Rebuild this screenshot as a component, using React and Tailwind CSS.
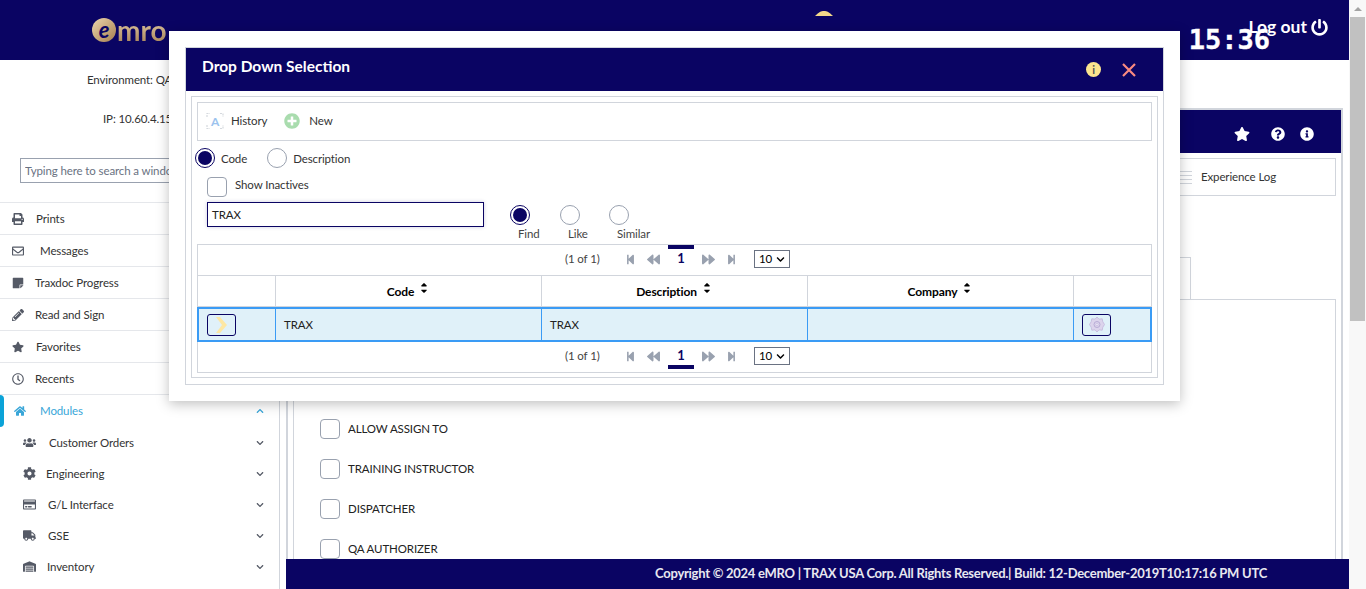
import {
  FaPrint,
  FaRegEnvelope,
  FaStickyNote,
  FaPencilAlt,
  FaStar,
  FaRegClock,
  FaHome,
  FaUsers,
  FaCog,
  FaTruck,
  FaWarehouse,
  FaQuestionCircle,
  FaInfoCircle,
  FaChevronDown,
  FaChevronUp,
  FaStepBackward,
  FaStepForward,
  FaBackward,
  FaForward,
  FaSortUp,
  FaSortDown,
  FaRegCreditCard,
  FaPowerOff,
  FaPlusCircle,
} from "react-icons/fa";

const menu = [
  { label: "Prints", Icon: FaPrint, gap: "w-[12px]" },
  { label: "Messages", Icon: FaRegEnvelope, gap: "w-[16px]" },
  { label: "Traxdoc Progress", Icon: FaStickyNote, gap: "w-[11px]" },
  { label: "Read and Sign", Icon: FaPencilAlt, gap: "w-[11px]" },
  { label: "Favorites", Icon: FaStar, gap: "w-[12px]" },
  { label: "Recents", Icon: FaRegClock, gap: "w-[11px]" },
];

const modules = [
  { label: "Customer Orders", Icon: FaUsers, gap: "w-[13px]" },
  { label: "Engineering", Icon: FaCog, gap: "w-[10px]" },
  { label: "G/L Interface", Icon: FaRegCreditCard, gap: "w-[12px]" },
  { label: "GSE", Icon: FaTruck, gap: "w-[12px]" },
  { label: "Inventory", Icon: FaWarehouse, gap: "w-[11px]" },
];

const roles = ["ALLOW ASSIGN TO", "TRAINING INSTRUCTOR", "DISPATCHER", "QA AUTHORIZER"];

const Radio = ({ checked }) => (
  <span
    className={`flex h-5 w-5 shrink-0 items-center justify-center rounded-full border bg-white ${
      checked ? "border-[#0a0463]" : "border-gray-400"
    }`}
  >
    {checked && <span className="h-[14px] w-[14px] rounded-full bg-[#0a0463]" />}
  </span>
);

const Paginator = ({ bar }) => (
  <div className="flex h-full items-center text-[#444]">
    <span className="ml-[367px] w-[60px]">(1 of 1)</span>
    <FaStepBackward className="text-[11px] text-gray-400" />
    <FaBackward className="ml-[11px] text-[13px] text-gray-400" />
    <span className="relative ml-[8px] flex h-full w-[26px] items-center justify-center text-[13px] font-bold text-[#0a0463]">
      1
      <span className={`absolute left-0 h-1 w-[26px] bg-[#0a0463] ${bar === "top" ? "top-0" : "bottom-px"}`} />
    </span>
    <FaForward className="ml-[8px] text-[13px] text-gray-400" />
    <FaStepForward className="ml-[11px] text-[11px] text-gray-400" />
    <span className="ml-[17px] flex h-[18px] w-9 items-center justify-between border border-gray-500 px-1 text-black">
      10
      <FaChevronDown className="text-[9px]" />
    </span>
  </div>
);

const SortHead = ({ label }) => (
  <div className="flex h-full items-center justify-center gap-[6px] border-r border-gray-300 pr-[2px] pt-[2px] text-[12px] font-bold text-black">
    {label}
    <span className="relative -top-[3px] flex h-3 w-2 flex-col items-center text-[10px]">
      <FaSortUp className="absolute -top-[1px]" />
      <FaSortDown className="absolute top-[1px]" />
    </span>
  </div>
);

const GoldChevron = () => (
  <svg width="13" height="18" viewBox="0 0 13 18" className="shrink-0">
    <path d="M1 1h4l7 8-7 8H1l6-8z" fill="#fde7a3" />
  </svg>
);

const GearIcon = () => (
  <svg width="16" height="17" viewBox="0 0 16 17" className="shrink-0">
    <path
      d="M8 1l2 2.200 3.200-.4.6 3 1.700 2.700-1.700 2.700-.6 3-3.200-.4L8 16l-2-2.200-3.200.4-.6-3L.5 8.500l1.700-2.700.6-3 3.200.4z"
      fill="#dcd4ec"
      stroke="#c9bfe0"
    />
    <circle cx="8" cy="8.500" r="3" fill="none" stroke="#b8acd6" />
    <circle cx="8" cy="8.500" r="1.200" fill="#eee9f6" stroke="#b8acd6" strokeWidth="0.5" />
  </svg>
);

const HistoryIcon = () => (
  <svg width="18" height="18" viewBox="0 0 18 18" className="shrink-0">
    <path
      d="M1 5V1.500h3M14 1.500h3V5M1 13v3.500h3M14 16.500h3V13"
      fill="none"
      stroke="#d5d9de"
      strokeWidth="1.200"
      strokeDasharray="2 1"
    />
    <text x="9" y="13.500" textAnchor="middle" fontSize="12" fontWeight="700" fill="#9cc3ee">
      A
    </text>
  </svg>
);

export default function App() {
  return (
    <div className="relative flex h-[589px] w-[1366px] overflow-hidden bg-white font-[Lato,sans-serif] text-[11.500px] tracking-[-0.01em] text-[#333]">
      <div className="flex w-[1349px] flex-col">
        {/* Header */}
        <header className="relative flex h-[60px] shrink-0 items-center justify-between bg-[#0a0463] pb-[1px] pl-[92px]">
          <div className="flex items-center">
            <span className="flex h-[24px] w-[24px] items-center justify-center rounded-full bg-gradient-to-br from-[#eed7ae] to-[#a67f50] text-[22px] font-bold italic leading-none text-[#0a0463]">
              e
            </span>
            <span className="ml-px bg-gradient-to-b from-[#e8d3ad] to-[#a9855a] bg-clip-text text-[28px] font-bold leading-none tracking-normal text-transparent">
              mro
            </span>
          </div>
          <svg width="18" height="5" viewBox="0 0 18 5" className="absolute left-[815px] top-[11px]">
            <path d="M0 5C4 1 6 0 9 0s5 1 9 5z" fill="#f3d98a" />
          </svg>
          <div className="absolute right-[79px] top-[24px] font-['DejaVu_Sans_Mono',monospace] text-[27px] font-bold leading-[32px] tracking-normal text-white [-webkit-text-stroke:0.4px_white]">
            15:36
          </div>
          <div className="absolute right-[21px] top-[16px] flex items-center gap-[4px] text-[17.500px] font-bold leading-[22px] tracking-normal text-white">
            Log out
            <FaPowerOff className="text-[17px]" />
          </div>
        </header>

        <div className="flex min-h-0 flex-1">
          {/* Sidebar */}
          <aside className="w-[280px] shrink-0 border-r border-gray-300">
            <p className="mt-[12px] pl-[87px] leading-[16px]">Environment: QA1</p>
            <p className="mt-[23px] pl-[103px] leading-[16px]">IP: 10.60.4.150</p>
            <input
              readOnly
              placeholder="Typing here to search a window"
              className="ml-[20px] mt-[31px] h-[25px] w-[240px] border border-gray-400 px-1 placeholder:text-gray-500"
            />
            <div className="mt-[19px] border-t border-gray-200">
              {menu.map(({ label, Icon, gap }) => (
                <div key={label} className="flex h-8 items-center border-b border-gray-200 pl-[12px]">
                  <Icon className="w-[12px] shrink-0 text-[12px] text-[#555a66]" />
                  <span className={gap} />
                  {label}
                </div>
              ))}
              <div className="relative flex h-8 items-center pl-[14px] pr-[15px] text-[#39a6d8]">
                <span className="absolute left-0 top-0 h-full w-1 rounded-r-sm bg-[#0ba3d8]" />
                <FaHome className="w-[12px] shrink-0 text-[12px]" />
                <span className="w-[14px]" />
                <span className="flex-1">Modules</span>
                <FaChevronUp className="text-[8px]" />
              </div>
              {modules.map(({ label, Icon, gap }) => (
                <div key={label} className="flex h-[31px] items-center pl-[23px] pr-[15px]">
                  <Icon className="w-[13px] shrink-0 text-[13px] text-[#555a66]" />
                  <span className={gap} />
                  <span className="flex-1">{label}</span>
                  <FaChevronDown className="text-[8px] text-[#555a66]" />
                </div>
              ))}
            </div>
          </aside>

          {/* Main panel */}
          <main className="ml-[6px] mt-[48px] flex w-[1057px] flex-col border-x-2 border-t-2 border-gray-300 px-[5px] pb-0">
            <div className="-mx-[5px] flex h-[43px] shrink-0 items-center justify-end bg-[#0a0463] pr-[27px] pt-[4px] text-white">
              <FaStar className="text-[16px]" />
              <FaQuestionCircle className="ml-[21px] text-[14px]" />
              <FaInfoCircle className="ml-[15px] text-[14px]" />
            </div>
            <div className="mt-[5px] flex h-[38px] shrink-0 items-center justify-end border border-gray-300 pr-[59px]">
              <span className="mr-[9px] flex w-3 flex-col gap-[3px]">
                <span className="h-px bg-gray-300" />
                <span className="h-px bg-gray-300" />
                <span className="h-px bg-gray-300" />
                <span className="h-px bg-gray-300" />
              </span>
              Experience Log
            </div>
            <div className="mt-[61px] h-[42px] w-[898px] shrink-0 border-r border-t border-gray-300" />
            <div className="flex-1 border-x border-t border-gray-300 pl-[26px] pt-[119px]">
              {roles.map((role) => (
                <div key={role} className="mb-5 flex h-5 items-center gap-2 text-[#222]">
                  <span className="h-5 w-5 rounded-sm border border-gray-400" />
                  {role}
                </div>
              ))}
            </div>
          </main>
        </div>
      </div>

      {/* Page scrollbar */}
      <div className="flex w-[17px] flex-col items-center bg-[#f8f8f8]">
        <span className="mt-[7px] h-0 w-0 border-x-[4px] border-b-[4px] border-x-transparent border-b-[#a3a3a3]" />
        <span className="mt-[6px] h-[304px] w-[15px] bg-[#c1c1c1]" />
      </div>

      {/* Footer */}
      <footer className="absolute bottom-0 left-[286px] flex h-[30px] w-[1063px] items-center justify-end bg-[#0a0463] pr-[82px] text-[13px] font-bold tracking-[-0.02em] text-[#e8e8f0]">
        Copyright © 2024 eMRO | TRAX USA Corp. All Rights Reserved.| Build: 12-December-2019T10:17:16 PM UTC
      </footer>

      {/* Drop down dialog */}
      <div className="absolute left-[169px] top-[31px] h-[370px] w-[1011px] bg-white pl-[16px] pt-[16px] shadow-[0_3px_12px_rgba(0,0,0,0.25)]">
        <div className="h-[338px] w-[979px] border border-gray-300">
          <div className="flex h-[43px] items-center justify-between bg-[#0a0463] pb-[6px] pl-[16px] pr-[27px]">
            <h2 className="text-[15.500px] font-bold tracking-normal text-white">Drop Down Selection</h2>
            <div className="flex items-center gap-[21px] pt-[6px]">
              <span className="flex h-[15px] w-[15px] items-center justify-center rounded-full bg-[#fbe58f] text-[11px] font-bold leading-none text-[#555]">
                i
              </span>
              <svg width="14" height="14" viewBox="0 0 14 14">
                <path d="M1 1l12 12M13 1L1 13" stroke="#f98a80" strokeWidth="2.200" />
              </svg>
            </div>
          </div>
          <div className="mx-[5px] mt-[5px] h-[282px] border border-gray-300 px-[5px] pt-[5px]">
            <div className="flex h-[39px] items-center border border-gray-300 pb-px pl-[8px]">
              <HistoryIcon />
              <span className="ml-[7px]">History</span>
              <FaPlusCircle className="ml-[17px] text-[16px] text-[#a9dcae]" />
              <span className="ml-[9px]">New</span>
            </div>
            <div className="-ml-[2px] mt-[7px] flex h-5 items-center">
              <Radio checked />
              <span className="ml-[6px] pt-px">Code</span>
              <span className="ml-[20px]">
                <Radio />
              </span>
              <span className="ml-[6px] pt-px">Description</span>
            </div>
            <div className="ml-[10px] mt-[9px] flex h-5">
              <span className="h-5 w-5 rounded-sm border border-gray-400" />
              <span className="ml-2 leading-[16px]">Show Inactives</span>
            </div>
            <div className="ml-[10px] mt-[5px] flex h-[42px]">
              <div className="flex h-[25px] w-[277px] items-center border border-[#0a0463] px-1 text-[#222] shadow-[0_0_4px_rgba(10,4,99,0.2)]">
                TRAX
              </div>
              <div className="ml-[26px] grid grid-cols-[50px_49px_auto] text-[#444]">
                {["Find", "Like", "Similar"].map((opt, i) => (
                  <div key={opt} className="flex flex-col items-start pt-[3px]">
                    <Radio checked={i === 0} />
                    <span className="mt-[1px] pl-[8px] leading-[16px]">{opt}</span>
                  </div>
                ))}
              </div>
            </div>
            <div className="h-[129px] border border-gray-300">
              <div className="h-[31px] border-b border-gray-300 pb-[2px]">
                <Paginator bar="top" />
              </div>
              <div className="grid h-[31px] grid-cols-[78px_266px_266px_266px_77px] border-b border-gray-300">
                <div className="border-r border-gray-300" />
                <SortHead label="Code" />
                <SortHead label="Description" />
                <SortHead label="Company" />
                <div />
              </div>
              <div className="-mx-px grid h-[35px] grid-cols-[77px_266px_266px_266px_78px] border-2 border-[#3a9bf5] bg-[#e0f1f9] text-[#222]">
                <div className="flex items-center border-r border-[#3a9bf5] pl-[8px]">
                  <span className="flex h-[22px] w-[29px] items-center justify-center rounded-[3px] border border-[#0a0463]">
                    <GoldChevron />
                  </span>
                </div>
                <div className="flex items-center border-r border-[#3a9bf5] pl-[8px]">TRAX</div>
                <div className="flex items-center border-r border-[#3a9bf5] pl-[8px]">TRAX</div>
                <div className="border-r border-[#3a9bf5]" />
                <div className="flex items-center pl-[8px]">
                  <span className="flex h-[22px] w-[29px] items-center justify-center rounded-[3px] border border-[#0a0463]">
                    <GearIcon />
                  </span>
                </div>
              </div>
              <div className="h-[28px]">
                <Paginator bar="bottom" />
              </div>
            </div>
          </div>
        </div>
      </div>
    </div>
  );
}
